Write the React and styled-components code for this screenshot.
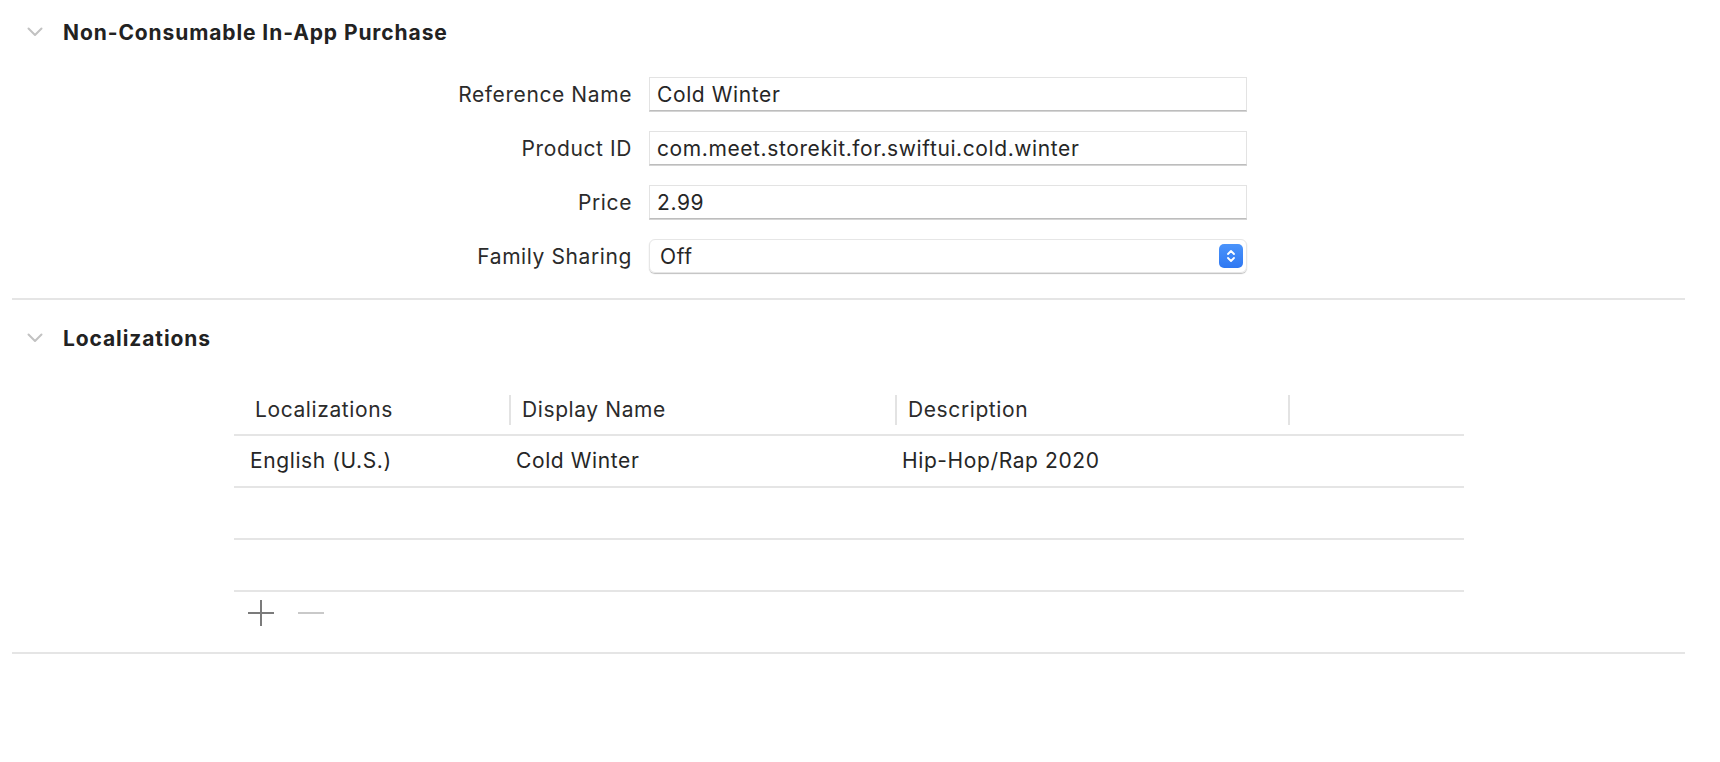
import React from "react"
import styled, { createGlobalStyle } from "styled-components"

const GlobalStyle = createGlobalStyle`
	body {
		margin: 0;
		background: #fff;
		font-family: Inter, "Noto Sans", sans-serif;
		color: #262626;
		letter-spacing: 0.6px;
	}
`

const fields = [
	{ label: "Reference Name", value: "Cold Winter" },
	{ label: "Product ID", value: "com.meet.storekit.for.swiftui.cold.winter" },
	{ label: "Price", value: "2.99" },
]

const columns = ["Localizations", "Display Name", "Description", ""]

const rows = [
	["English (U.S.)", "Cold Winter", "Hip-Hop/Rap 2020", ""],
	["", "", "", ""],
	["", "", "", ""],
]

const Chevron = () => (
	<svg width="16" height="10" viewBox="0 0 16 10">
		<path d="M1.5 1.5 L8 8 L14.5 1.5" fill="none" stroke="#c2c2c2" strokeWidth="2" strokeLinecap="round" strokeLinejoin="round" />
	</svg>
)

const Stepper = () => (
	<svg width="10" height="16" viewBox="0 0 10 16">
		<path d="M2 6 L5 3 L8 6 M2 10 L5 13 L8 10" fill="none" stroke="#fff" strokeWidth="1.8" strokeLinecap="round" strokeLinejoin="round" />
	</svg>
)

const App = () => (
	<>
		<GlobalStyle />
		<Page>
			<Section>
				<SectionHeader>
					<ChevronBox><Chevron /></ChevronBox>
					<Title>Non-Consumable In-App Purchase</Title>
				</SectionHeader>
				<Form>
					{fields.map(f => (
						<React.Fragment key={f.label}>
							<Label>{f.label}</Label>
							<Field>{f.value}</Field>
						</React.Fragment>
					))}
					<Label>Family Sharing</Label>
					<Popup>
						<span>Off</span>
						<StepperButton><Stepper /></StepperButton>
					</Popup>
				</Form>
			</Section>
			<Divider />
			<Section>
				<SectionHeader offset={6}>
					<ChevronBox><Chevron /></ChevronBox>
					<Title>Localizations</Title>
				</SectionHeader>
				<Table>
					<HeaderRow>
						{columns.map((c, i) => (
							<HeaderCell key={i} first={i == 0} divided={i > 0}>{c}</HeaderCell>
						))}
					</HeaderRow>
					{rows.map((r, ri) => (
						<BodyRow key={ri}>
							{r.map((c, i) => <BodyCell key={i} first={i == 0}>{c}</BodyCell>)}
						</BodyRow>
					))}
					<Toolbar>
						<ToolButton>
							<svg width="28" height="28" viewBox="0 0 28 28">
								<path d="M14 1 V27 M1 14 H27" stroke="#7b7b7b" strokeWidth="2" />
							</svg>
						</ToolButton>
						<ToolButton>
							<svg width="28" height="28" viewBox="0 0 28 28">
								<path d="M1 14 H27" stroke="#c9c9c9" strokeWidth="2" />
							</svg>
						</ToolButton>
					</Toolbar>
				</Table>
			</Section>
			<Divider />
		</Page>
	</>
)

const Page = styled.div`
	display: flex;
	flex-direction: column;
	padding: 0 35px 0 12px;
	min-height: 762px;
	box-sizing: border-box;
`

const Section = styled.div`
	display: flex;
	flex-direction: column;
`

const SectionHeader = styled.div`
	display: flex;
	align-items: center;
	height: 64px;
	gap: 20px;
	padding-left: 15px;
	margin-top: ${p => p.offset || 0}px;
`

const ChevronBox = styled.div`
	display: flex;
	width: 16px;
`

const Title = styled.div`
	font-size: 21px;
	font-weight: 700;
	letter-spacing: 0.9px;
	color: #222;
`

const Form = styled.div`
	display: grid;
	grid-template-columns: 620px 598px;
	column-gap: 17px;
	row-gap: 20px;
	align-items: center;
	padding: 13px 0 25px;
`

const Label = styled.div`
	text-align: right;
	font-size: 21px;
	color: #2b2b2b;
`

const Field = styled.div`
	height: 34px;
	box-sizing: border-box;
	display: flex;
	align-items: center;
	padding: 0 7px;
	font-size: 21px;
	color: #262626;
	border: 1px solid #e3e3e3;
	border-bottom-color: #bdbdbd;
	box-shadow: 0 1px 0 #d4d4d4;
`

const Popup = styled.div`
	height: 34px;
	box-sizing: border-box;
	display: flex;
	align-items: center;
	justify-content: space-between;
	padding: 0 3px 0 10px;
	font-size: 21px;
	color: #262626;
	border-radius: 6px;
	border: 1px solid #e6e6e6;
	box-shadow: 0 1px 1px rgba(0, 0, 0, 0.25);
`

const StepperButton = styled.div`
	display: flex;
	align-items: center;
	justify-content: center;
	width: 24px;
	height: 24px;
	border-radius: 5px;
	background: linear-gradient(#4b94fb, #2f78f2);
`

const Divider = styled.div`
	height: 2px;
	background: #e5e5e5;
`

const Table = styled.div`
	display: flex;
	flex-direction: column;
	width: 1230px;
	margin: 15px 0 0 222px;
`

const grid = `
	display: grid;
	grid-template-columns: 275px 386px 393px 176px;
`

const HeaderRow = styled.div`
	${grid}
	height: 49px;
	align-items: center;
	border-bottom: 2px solid #e5e5e5;
`

const HeaderCell = styled.div`
	height: 30px;
	display: flex;
	align-items: center;
	padding-left: ${p => p.first ? "21px" : "11px"};
	border-left: ${p => p.divided ? "2px solid #e3e3e3" : "none"};
	font-size: 21px;
	color: #2b2b2b;
`

const BodyRow = styled.div`
	${grid}
	height: 52px;
	box-sizing: border-box;
	align-items: center;
	padding-bottom: 2px;
	border-bottom: 2px solid #e5e5e5;
`

const BodyCell = styled.div`
	padding-left: ${p => p.first ? "16px" : "7px"};
	font-size: 21px;
	color: #262626;
`

const Toolbar = styled.div`
	display: flex;
	align-items: flex-start;
	gap: 22px;
	height: 60px;
	box-sizing: border-box;
	padding: 7px 0 0 13px;
`

const ToolButton = styled.div`
	display: flex;
`

export default App
